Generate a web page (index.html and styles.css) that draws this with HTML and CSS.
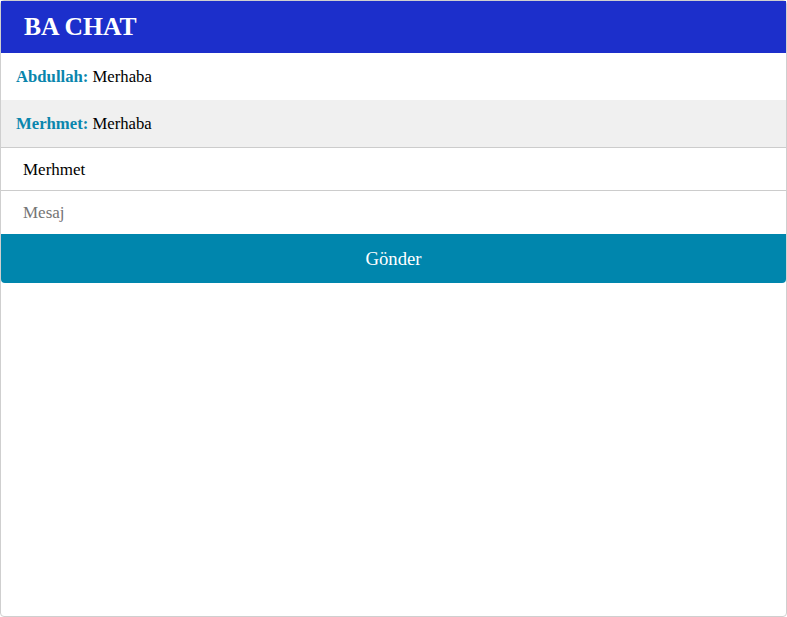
FILE: index.html
```html
<!DOCTYPE html>
<html>
<head>
<meta charset="utf-8">
<link rel="stylesheet" href="styles.css">
</head>
<body>
<div class="chat">
  <div class="header">BA CHAT</div>
  <div class="messages">
    <div class="msg"><span class="name">Abdullah:</span> Merhaba</div>
    <div class="msg alt"><span class="name">Merhmet:</span> Merhaba</div>
  </div>
  <input class="field first" type="text" value="Merhmet">
  <input class="field second" type="text" placeholder="Mesaj">
  <button class="send">Gönder</button>
</div>
</body>
</html>
```
FILE: styles.css
```css
html, body {
  margin: 0;
  padding: 0;
  background: #fff;
}
.chat {
  box-sizing: border-box;
  width: 787px;
  height: 617px;
  border: 1px solid #cfcfcf;
  border-radius: 4px;
  font-family: "Liberation Serif", "Times New Roman", serif;
  display: flex;
  flex-direction: column;
}
.header {
  height: 52px;
  line-height: 52px;
  padding-left: 23px;
  background: #1c2fcb;
  color: #fff;
  font-weight: bold;
  font-size: 25.6px;
}
.messages {
  border-bottom: 1px solid #cccccc;
}
.msg {
  height: 47px;
  line-height: 47px;
  padding-left: 15px;
  font-size: 16.7px;
  color: #000;
}
.msg.alt {
  background: #f0f0f0;
}
.name {
  color: #0a86ad;
  font-weight: bold;
}
.field {
  box-sizing: border-box;
  display: block;
  width: 100%;
  margin: 0;
  border: none;
  outline: none;
  padding: 1px 0 0 22px;
  font-family: "Liberation Serif", "Times New Roman", serif;
  font-size: 17px;
  color: #000;
  background: #fff;
}
.field.first {
  height: 43px;
  border-bottom: 1px solid #cccccc;
}
.field.second {
  height: 43px;
}
.field::placeholder {
  color: #757575;
}
.send {
  display: block;
  width: 100%;
  height: 49px;
  margin: 0;
  padding-top: 2px;
  border: none;
  border-radius: 0 0 4px 4px;
  background: #0086ad;
  color: #fff;
  font-family: "Liberation Serif", "Times New Roman", serif;
  font-size: 18.7px;
}
```
